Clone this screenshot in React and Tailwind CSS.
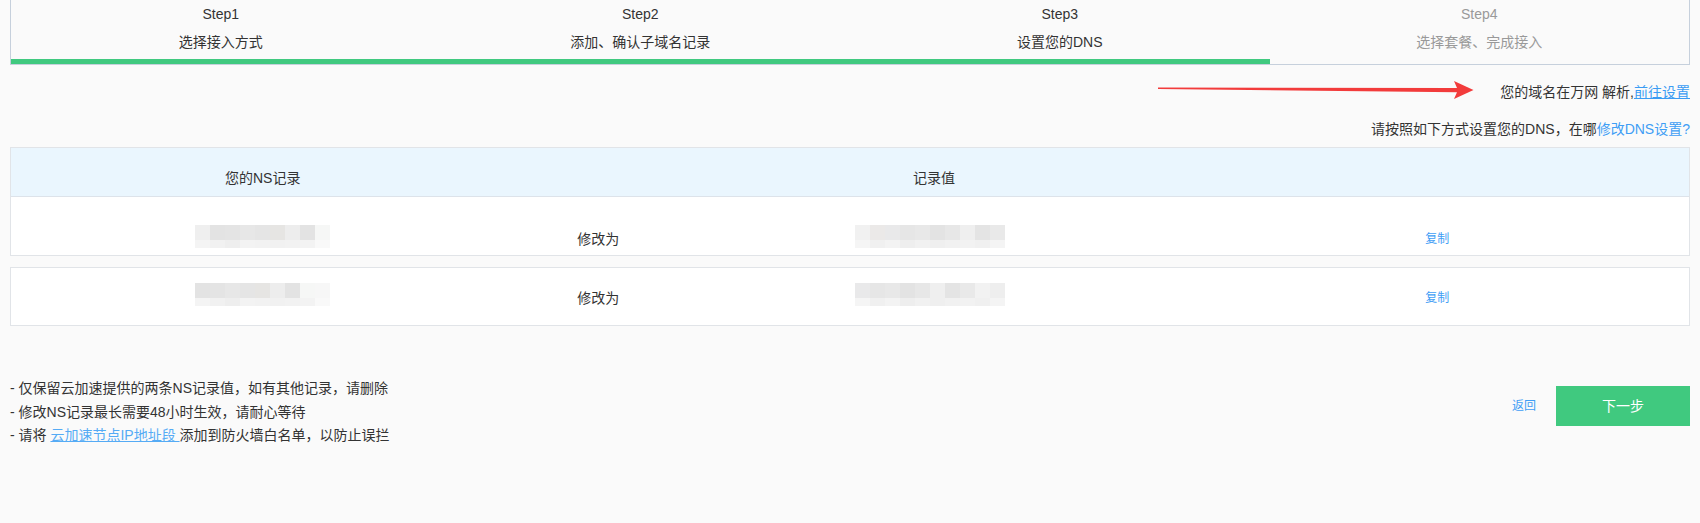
import React from 'react';

const steps = [
    { title: 'Step1', desc: '选择接入方式', done: true },
    { title: 'Step2', desc: '添加、确认子域名记录', done: true },
    { title: 'Step3', desc: '设置您的DNS', done: true },
    { title: 'Step4', desc: '选择套餐、完成接入', done: false },
];

// 打码的记录值（马赛克）
const nsTop = ['#efefef', '#e3e3e3', '#e4e4e4', '#e7e7e7', '#e5e5e5', '#e6e5e3', '#ededed', '#e3e3e3', '#f6f7f6'];
const nsBottom = ['#f4f4f4', '#f1f1f1', '#eeeeee', '#f3f3f3', '#f2f2f2', '#f1f1f1', '#f2f2f2', '#f3f3f3', '#f9f9f9'];
const valTop = ['#f1f1f1', '#ebe9e8', '#e9e9ea', '#e6e6e6', '#e8e8e8', '#e3e3e3', '#e7e7e7', '#efefef', '#e4e4e4', '#e9e9e9'];
const valBottom = ['#f5f5f5', '#f0f0f0', '#f3f3f3', '#eeeeee', '#f1f1f1', '#efefef', '#f1f1f1', '#f2f2f2', '#f0f0f0', '#f4f4f4'];

const Mosaic = ({ top, bottom, cell }) => (
    <div className="flex flex-col">
        <div className="flex">
            {top.map((c, i) => (
                <div key={i} className="h-[15px]" style={{ width: cell, background: c }} />
            ))}
        </div>
        <div className="flex">
            {bottom.map((c, i) => (
                <div key={i} className="h-[8px]" style={{ width: cell, background: c }} />
            ))}
        </div>
    </div>
);

const Arrow = () => (
    <svg width="316" height="20" viewBox="0 0 316 20" className="mt-[-4px]">
        <path d="M0 7.6 L299 8 L296 1 L315.5 10 L296 19 L299 12.2 L0 9 Z" fill="#f23b3b" />
    </svg>
);

const RecordRow = ({ top, bottom, vTop, vBottom, pad, shift }) => (
    <div className={`grid grid-cols-[3fr_1fr_3fr_3fr] ${pad}`}>
        <div className="flex justify-center">
            <div className={shift}>
                <Mosaic top={top} bottom={bottom} cell={15} />
            </div>
        </div>
        <div className="text-center leading-[20px]">修改为</div>
        <div className="flex justify-center">
            <div className={`${shift} ml-[-8px]`}>
                <Mosaic top={vTop} bottom={vBottom} cell={15} />
            </div>
        </div>
        <div className="text-center leading-[20px] text-[12px] text-[#3f9ef5] cursor-pointer">复制</div>
    </div>
);

const App = () => {
    return (
        <div
            className="min-h-[523px] bg-[#fafafa] px-[10px] text-[14px] text-[#333]"
            style={{ fontFamily: '"Liberation Sans", "Noto Sans CJK SC", sans-serif' }}
        >
            {/* 步骤条 */}
            <div className="border-x border-b border-[#c6d0dc]">
                <div className="grid grid-cols-4 text-center">
                    {steps.map((s) => (
                        <div key={s.title} className={s.done ? 'text-[#333]' : 'text-[#999]'}>
                            <div className="leading-[28px]">{s.title}</div>
                            <div className="leading-[28px]">{s.desc}</div>
                        </div>
                    ))}
                </div>
                <div className="mt-[3px] h-[5px] w-3/4 bg-[#40c97f]" />
            </div>

            {/* 提示 */}
            <div className="mt-[17px] flex items-center justify-end h-[20px] leading-[20px]">
                <div className="mr-[26px]">
                    <Arrow />
                </div>
                <span>
                    您的域名在万网 解析,
                    <a className="text-[#3a9cf3] underline cursor-pointer">前往设置</a>
                </span>
            </div>
            <div className="mt-[17px] text-right leading-[20px]">
                请按照如下方式设置您的DNS，在哪<span className="text-[#3f9ef5] cursor-pointer">修改DNS设置?</span>
            </div>

            {/* NS记录表 */}
            <div className="mt-[8px] border border-[#e1e4e8] bg-white">
                <div className="grid grid-cols-[3fr_1fr_3fr_3fr] h-[49px] bg-[#eaf6fe] border-b border-[#dde3ea] pt-[20px] leading-[20px]">
                    <div className="text-center">您的NS记录</div>
                    <div />
                    <div className="text-center">记录值</div>
                    <div />
                </div>
                <div className="h-[58px]">
                    <RecordRow
                        top={nsTop}
                        bottom={nsBottom}
                        vTop={valTop}
                        vBottom={valBottom}
                        pad="pt-[32px]"
                        shift="mt-[-4px]"
                    />
                </div>
            </div>
            <div className="mt-[11px] h-[59px] border border-[#e1e4e8] bg-white">
                <RecordRow
                    top={nsTop.slice(1).concat(['#f7f7f7'])}
                    bottom={nsBottom}
                    vTop={valTop.slice(2).concat(['#f2f2f2', '#eeeeee'])}
                    vBottom={valBottom}
                    pad="pt-[20px]"
                    shift="mt-[-5px]"
                />
            </div>

            {/* 底部说明和按钮 */}
            <div className="mt-[51px] flex justify-between items-start">
                <div className="leading-[23.5px]">
                    <div>- 仅保留云加速提供的两条NS记录值，如有其他记录，请删除</div>
                    <div>- 修改NS记录最长需要48小时生效，请耐心等待</div>
                    <div>
                        - 请将 <a className="text-[#55abf5] underline cursor-pointer">云加速节点IP地址段 </a>添加到防火墙白名单，以防止误拦
                    </div>
                </div>
                <div className="mt-[9px] flex items-center">
                    <a className="mr-[20px] text-[12px] text-[#3f9ef5] cursor-pointer">返回</a>
                    <button className="w-[134px] h-[40px] bg-[#40c97f] text-white text-[14px]">下一步</button>
                </div>
            </div>
        </div>
    );
};

export default App;
